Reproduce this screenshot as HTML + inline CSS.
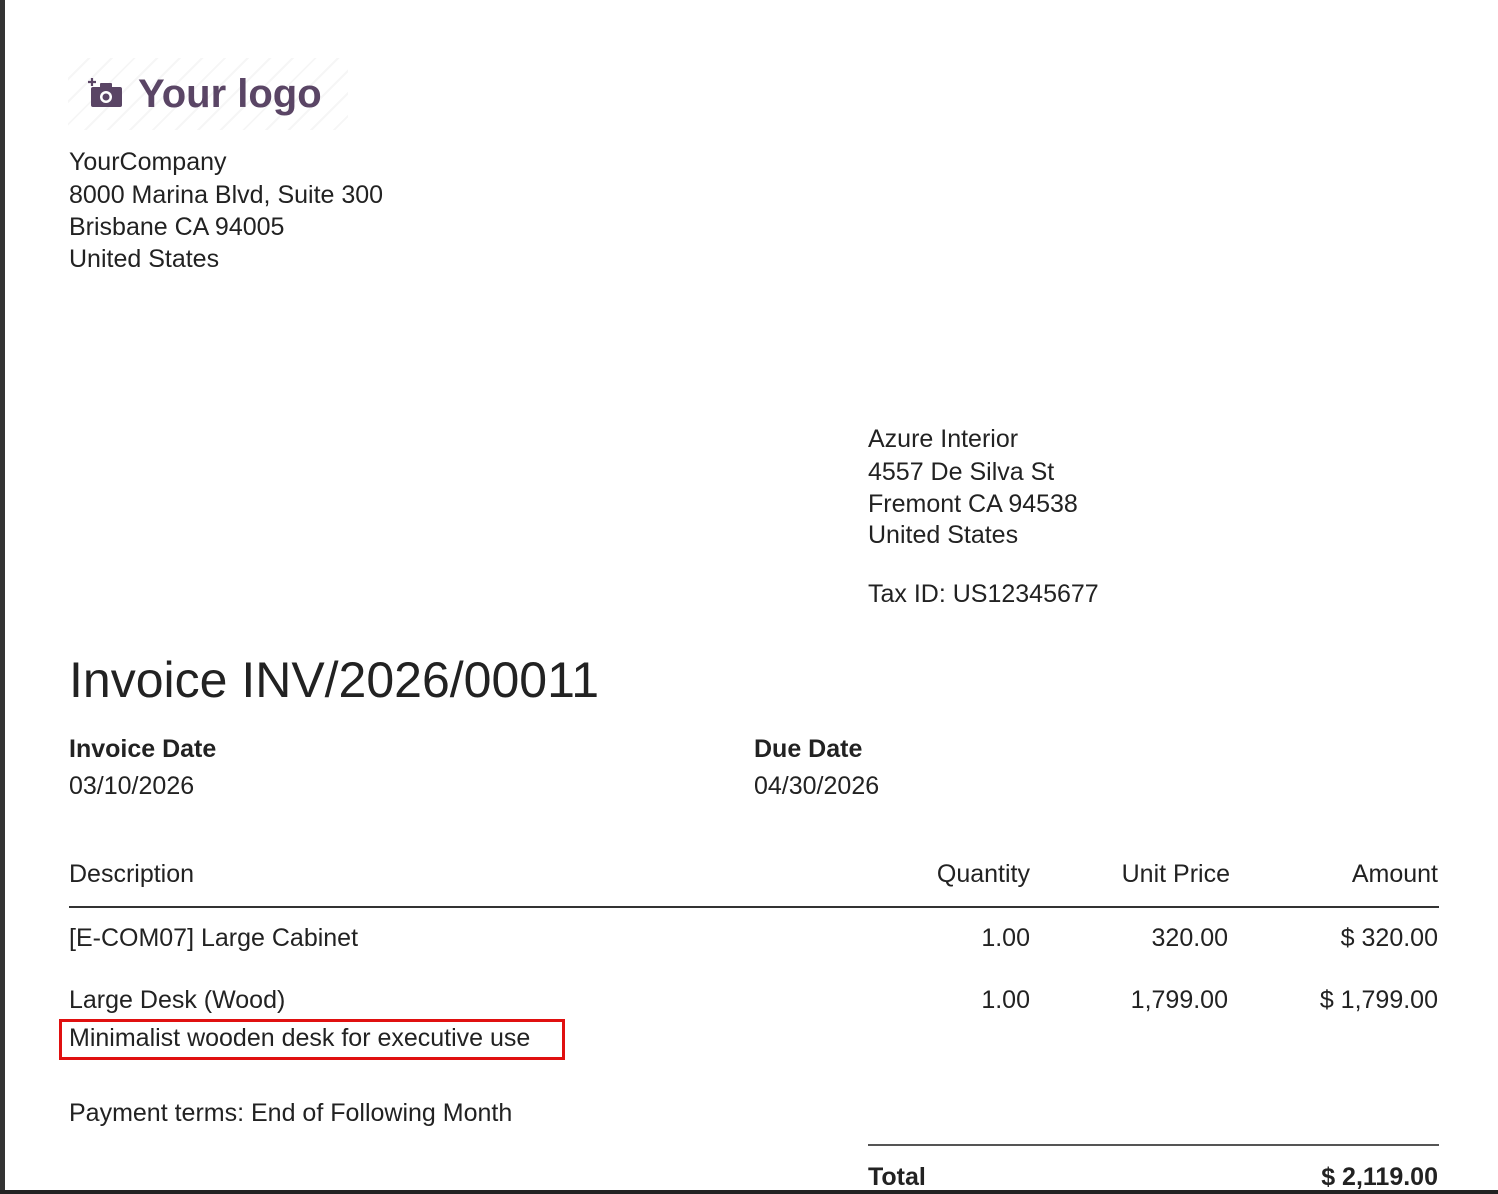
<!DOCTYPE html>
<html><head><meta charset="utf-8"><style>
body{margin:0;width:1498px;height:1194px;background:#fff;position:relative;overflow:hidden;font-family:"Liberation Sans",Arial,sans-serif;color:#222}
.a{position:absolute;white-space:nowrap;font-size:25px;line-height:32px}
.b{font-weight:bold}
.r{text-align:right}
</style></head><body>
<div style="position:absolute;left:0;top:0;width:5px;height:1194px;background:#333"></div>
<div style="position:absolute;left:0;top:1190px;width:1498px;height:4px;background:#222"></div>
<div style="position:absolute;left:68px;top:58px;width:280px;height:72px;background:repeating-linear-gradient(135deg,#fff 0 14px,#f6f6f6 14px 16px)"></div>
<svg style="position:absolute;left:88px;top:76px" width="36" height="34" viewBox="0 0 36 34">
<path d="M4 2v8M0 6h8" stroke="#5a4565" stroke-width="2.2"/>
<rect x="3" y="11" width="31" height="20" rx="2" fill="#5a4565"/><rect x="12" y="7" width="12" height="6" rx="1" fill="#5a4565"/>
<circle cx="18" cy="21" r="6" fill="#fff"/><circle cx="18" cy="21" r="3.5" fill="#5a4565"/></svg>
<div class="a b" style="left:138px;top:71px;font-size:40px;line-height:46px;color:#5a4565">Your logo</div>
<div class="a" style="left:69px;top:146px">YourCompany</div>
<div class="a" style="left:69px;top:179px">8000 Marina Blvd, Suite 300</div>
<div class="a" style="left:69px;top:211px">Brisbane CA 94005</div>
<div class="a" style="left:69px;top:243px">United States</div>
<div class="a" style="left:868px;top:423px">Azure Interior</div>
<div class="a" style="left:868px;top:456px">4557 De Silva St</div>
<div class="a" style="left:868px;top:488px">Fremont CA 94538</div>
<div class="a" style="left:868px;top:519px">United States</div>
<div class="a" style="left:868px;top:578px">Tax ID: US12345677</div>
<div class="a" style="left:69px;top:650px;font-size:50px;line-height:60px">Invoice INV/2026/00011</div>
<div class="a b" style="left:69px;top:733px">Invoice Date</div>
<div class="a" style="left:69px;top:770px">03/10/2026</div>
<div class="a b" style="left:754px;top:733px">Due Date</div>
<div class="a" style="left:754px;top:770px">04/30/2026</div>
<div class="a" style="left:69px;top:858px">Description</div>
<div class="a r" style="right:468px;top:858px">Quantity</div>
<div class="a r" style="right:268px;top:858px">Unit Price</div>
<div class="a r" style="right:60px;top:858px">Amount</div>
<div style="position:absolute;left:69px;top:906px;width:1370px;height:2px;background:#333"></div>
<div class="a" style="left:69px;top:922px">[E-COM07] Large Cabinet</div>
<div class="a r" style="right:468px;top:922px">1.00</div>
<div class="a r" style="right:270px;top:922px">320.00</div>
<div class="a r" style="right:60px;top:922px">$ 320.00</div>
<div class="a" style="left:69px;top:984px">Large Desk (Wood)</div>
<div class="a r" style="right:468px;top:984px">1.00</div>
<div class="a r" style="right:270px;top:984px">1,799.00</div>
<div class="a r" style="right:60px;top:984px">$ 1,799.00</div>
<div style="position:absolute;left:59px;top:1019px;width:500px;height:35px;border:3px solid #e01010"></div>
<div class="a" style="left:69px;top:1022px">Minimalist wooden desk for executive use</div>
<div class="a" style="left:69px;top:1097px">Payment terms: End of Following Month</div>
<div style="position:absolute;left:868px;top:1144px;width:571px;height:2px;background:#555"></div>
<div class="a b" style="left:868px;top:1161px">Total</div>
<div class="a b r" style="right:60px;top:1161px">$ 2,119.00</div>
</body></html>
